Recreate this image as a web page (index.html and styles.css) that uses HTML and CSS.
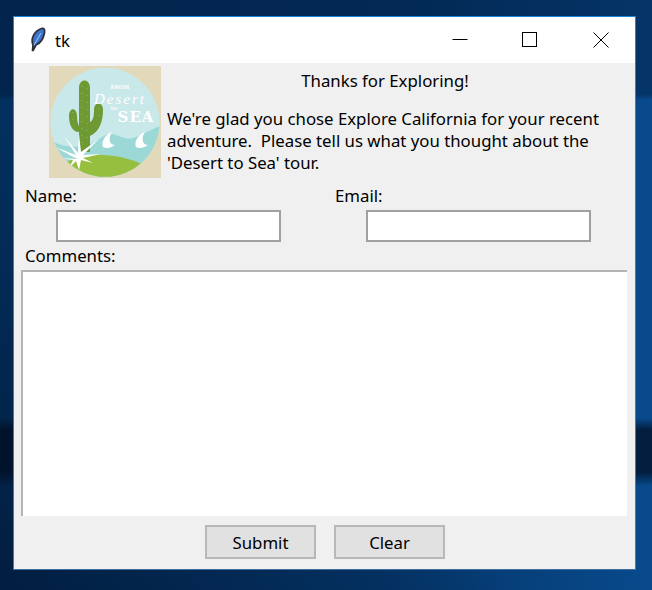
FILE: index.html
```html
<!DOCTYPE html>
<html lang="en">
<head>
  <meta charset="UTF-8">
  <title>tk</title>
  <link rel="stylesheet" href="styles.css">
</head>
<body>
  <div class="window">
    <div class="titlebar">
      <svg class="feather" width="18" height="26" viewBox="0 0 18 26">
        <path d="M3.5 23.5 L4 18 C1.5 12 5 4 12.5 1.5 C15.5 .8 16 3 15.5 6 C14.5 11 12 16 7 18 L4 23.5 Z" fill="#3a74cc" stroke="#2b2f38" stroke-width="1.7" stroke-linejoin="round"/>
        <path d="M5 18 L12 6" stroke="#a9c8ec" stroke-width="1" fill="none"/>
      </svg>
      <span class="app-name">tk</span>
      <div class="controls">
        <svg width="46" height="46" viewBox="0 0 46 46"><path d="M14.5 22.5 H29.5" stroke="#000"/></svg>
        <svg width="46" height="46" viewBox="0 0 46 46"><rect x="14.5" y="15.5" width="14" height="14" fill="none" stroke="#000"/></svg>
        <svg width="46" height="46" viewBox="0 0 46 46"><path d="M15.5 15.5 L30.5 30.5 M30.5 15.5 L15.5 30.5" stroke="#000"/></svg>
      </div>
    </div>

    <div class="content">
      <div class="header">
        <svg class="logo" width="112" height="112" viewBox="0 0 112 112">
          <rect width="112" height="112" fill="#e2d9bb"/>
          <clipPath id="disc"><circle cx="56" cy="56.3" r="54.5"/></clipPath>
          <g clip-path="url(#disc)">
            <rect width="112" height="112" fill="#c9e8ea"/>
            <path d="M0 74 C15 82 30 82 42 78 C50 74 55 67 64 68 C72 70 76 74 84 72 C92 70 100 64 112 60 V112 H0 Z" fill="#9cd8d6"/>
            <path d="M30 86 V66 C24 66 20 60 20 50 C20 41 28 41 28 50 C28 55 29 58 30 60 V22 C30 12 41 12 41 22 V56 C44 55 45 50 45 44 C45 35 54 35 54 44 C54 56 50 66 41 70 V86 Z" fill="#6f9a33"/>
            <path d="M33 20 V80 M38 22 V74 M24 46 V60 M50 42 V56" stroke="#9ab85f" stroke-width="1" stroke-dasharray="1 6" fill="none"/>
            <path d="M0 112 V106 C20 92 38 88 54 89 C72 90 88 94 104 104 V112 Z" fill="#96bf3f"/>
            <path d="M63 66 C55 69 52 77 54 81 C57 83 62 82 66 79 C60 79 59 72 63 66 Z" fill="#fff"/>
            <path d="M96 66 C88 69 85 77 87 81 C90 83 95 82 99 79 C93 79 92 72 96 66 Z" fill="#fff"/>
            <path d="M28 93 L6 81 L27 89 L15 70 L29 87 L30 68 L32 86 L50 73 L34 89 L52 88 L34 92 L44 97 L32 94 L30 104 L27 95 L20 102 L24 94 L10 92 Z" fill="#fff"/>
          </g>
          <text x="71" y="22.5" class="logo-from">FROM</text>
          <text x="71" y="38" class="logo-desert">Desert</text>
          <text x="61" y="44" class="logo-to">TO</text>
          <text x="87" y="56" class="logo-sea">SEA</text>
        </svg>
        <div class="intro">
          <p class="thanks">Thanks for Exploring!</p>
          <p>We're glad you chose Explore California for your recent adventure.&nbsp; Please tell us what you thought about the 'Desert to Sea' tour.</p>
        </div>
      </div>

      <div class="fields">
        <div class="field">
          <label for="name">Name:</label>
          <input type="text" id="name">
        </div>
        <div class="field">
          <label for="email">Email:</label>
          <input type="text" id="email">
        </div>
      </div>

      <label class="comments-label" for="comments">Comments:</label>
      <textarea id="comments"></textarea>

      <div class="buttons">
        <button>Submit</button>
        <button>Clear</button>
      </div>
    </div>
  </div>
</body>
</html>
```

FILE: styles.css
```css
html, body { height: 100%; }
body {
  margin: 0;
  padding: 16px 16px 20px 13px;
  box-sizing: border-box;
  font-family: "Noto Sans", sans-serif;
  font-size: 16.8px;
  color: #000;
  overflow: hidden;
  background:
    linear-gradient(180deg, rgba(0,12,32,0) 418px, rgba(0,12,32,.72) 430px, rgba(0,12,32,.72) 472px, rgba(0,12,32,0) 486px),
    linear-gradient(180deg, rgba(0,20,50,.4) 0, rgba(0,20,50,.4) 94px, rgba(0,20,50,0) 100px),
    linear-gradient(to top right, rgba(0,15,40,.55), rgba(0,15,40,0) 40%),
    linear-gradient(90deg, #03305e 0, #04366a 60%, #084a8c 100%);
}

.window {
  height: 554px;
  box-sizing: border-box;
  border: 1px solid #1b85d6;
  border-bottom-color: #3a6f9f;
  background: #f0f0f0;
  display: flex;
  flex-direction: column;
}

.titlebar {
  height: 46px;
  background: #fff;
  display: flex;
  align-items: center;
  flex: none;
}
.feather { margin-left: 15px; }
.app-name { margin-left: 8px; }
.controls { margin-left: auto; display: flex; margin-right: 11px; }
.controls svg { display: block; margin-right: 24px; }
.controls svg:last-child { margin-right: 0; }

.content { flex: 1; display: flex; flex-direction: column; padding: 3px 8px 0; }

.header { display: flex; margin-left: 27px; }
.logo { flex: none; display: block; }
.logo-from { font: bold 6px "Liberation Serif", serif; fill: #fff; text-anchor: middle; }
.logo-desert { font: italic 15px "Liberation Serif", serif; fill: #fff; text-anchor: middle; letter-spacing: 2px; }
.logo-to { font: bold 5px "Liberation Serif", serif; fill: #fff; }
.logo-sea { font: bold 15px "DejaVu Serif", serif; fill: #fff; text-anchor: middle; letter-spacing: 1px; }

.intro { margin-left: 6px; width: 436px; line-height: 22px; }
.intro p { margin: 0; }
.intro .thanks { text-align: center; margin-bottom: 15px; padding-top: 3px; line-height: 24px; }

.fields { display: flex; margin-top: 5px; }
.field { flex: none; width: 310px; display: flex; flex-direction: column; padding-left: 3px; box-sizing: border-box; }
.field label { line-height: 25px; }
.field input {
  margin: 2px 0 0 31px;
  width: 225px;
  height: 32px;
  box-sizing: border-box;
  border: 2px solid #a0a0a0;
  background: #fff;
  border-radius: 0;
  outline: none;
}

.comments-label { margin: 3px 0 0 3px; line-height: 22px; }

textarea {
  display: block;
  width: 606px;
  height: 246px;
  margin: 3px 0 0 -1px;
  box-sizing: border-box;
  padding: 0;
  border: none;
  border-top: 2px solid #b4b4b4;
  border-left: 2px solid #b4b4b4;
  background: #fff;
  resize: none;
  outline: none;
}

.buttons { display: flex; justify-content: center; gap: 18px; margin-top: 9px; padding-left: 1px; }
button {
  width: 111px;
  height: 34px;
  box-sizing: border-box;
  border: 2px solid #b8b8b8;
  background: #e1e1e1;
  font: inherit;
  color: #000;
  padding: 0;
}
```
